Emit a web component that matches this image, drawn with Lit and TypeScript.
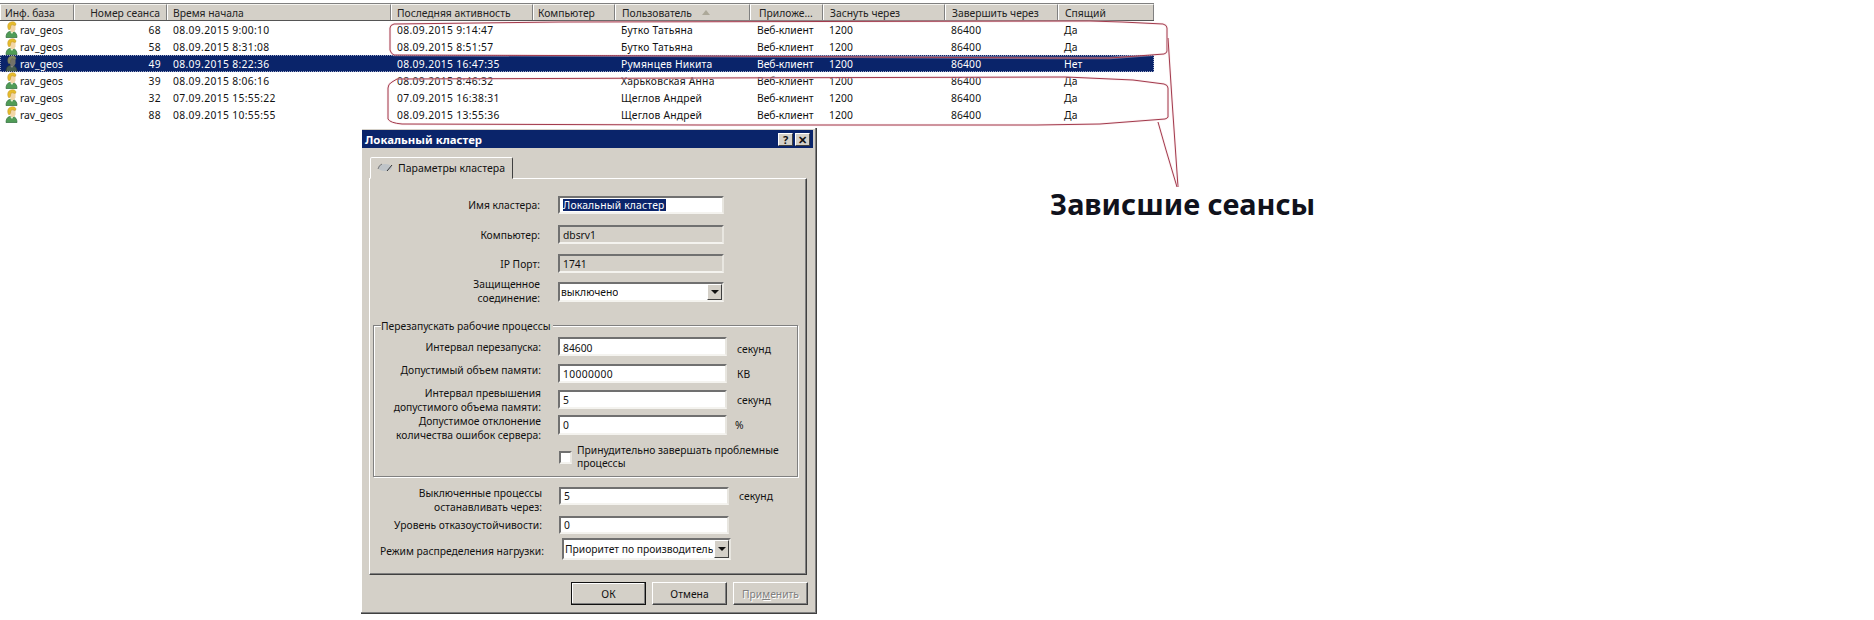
import { LitElement, html, css, svg } from "lit";
import { customElement } from "lit/decorators.js";

const COLS = [
  { t: "Инф. база", w: 74, c: "h0" },
  { t: "Номер сеанса", w: 93, c: "num" },
  { t: "Время начала", w: 224, c: "hl" },
  { t: "Последняя активность", w: 142, c: "hl" },
  { t: "Компьютер", w: 82, c: "hc" },
  { t: "Пользователь", w: 135, c: "sort" },
  { t: "Приложе...", w: 73, c: "hr" },
  { t: "Заснуть через", w: 122, c: "" },
  { t: "Завершить через", w: 113, c: "" },
  { t: "Спящий", w: 96, c: "" },
];

const ROWS = [
  ["rav_geos", "68", "08.09.2015 9:00:10", "08.09.2015 9:14:47", "", "Бутко Татьяна", "Веб-клиент", "1200", "86400", "Да"],
  ["rav_geos", "58", "08.09.2015 8:31:08", "08.09.2015 8:51:57", "", "Бутко Татьяна", "Веб-клиент", "1200", "86400", "Да"],
  ["rav_geos", "49", "08.09.2015 8:22:36", "08.09.2015 16:47:35", "", "Румянцев Никита", "Веб-клиент", "1200", "86400", "Нет"],
  ["rav_geos", "39", "08.09.2015 8:06:16", "08.09.2015 8:46:32", "", "Харьковская Анна", "Веб-клиент", "1200", "86400", "Да"],
  ["rav_geos", "32", "07.09.2015 15:55:22", "07.09.2015 16:38:31", "", "Щеглов Андрей", "Веб-клиент", "1200", "86400", "Да"],
  ["rav_geos", "88", "08.09.2015 10:55:55", "08.09.2015 13:55:36", "", "Щеглов Андрей", "Веб-клиент", "1200", "86400", "Да"],
];

const CELL_CLASS = ["", "num dgt", "dgt", "dgt", "", "wide", "cl", "dgt2", "dgt2", "wide"];

const avatar = (sel: boolean) => {
  const hair = sel ? "#85855f" : "#e6bb2c";
  const hairDark = sel ? "#5f5f48" : "#b0851c";
  const face = sel ? "#73736a" : "#f2d6a8";
  const body = sel ? "#465e50" : "#4f9c56";
  const bodyDark = sel ? "#2f3f38" : "#2d6a3a";
  return html`<svg class="ava" width="15" height="17" viewBox="0 0 15 17">
    <path d="M2 16.500c0-3.500 1.500-5.500 3.500-6h3.500c2.500.5 4 2.500 4 6z" fill=${body} stroke=${bodyDark} stroke-width=".7" />
    <path d="M6 10.500l2 2.500 1.500-2.500z" fill=${sel ? "#8a8a8a" : "#e8f0d8"} />
    <path d="M5.500 4h6v4.500l-1.500 2.500h-2.500l-2-2.500z" fill=${face} />
    <path d="M5 9c-1.500-1.500-1.500-4 -1-5.500.8-2 3-3 5-2.800 2 .2 3 1.300 3 3l-1 .8-3-.8-1.200 1-.3 2.500z" fill=${hair} stroke=${hairDark} stroke-width=".4" />
  </svg>`;
};

@customElement("app-root")
export class AppRoot extends LitElement {
  static styles = css`
    :host {
      display: block;
      position: relative;
      width: 1874px;
      height: 620px;
      background: #fff;
      overflow: hidden;
      font-family: "Noto Sans", "Liberation Sans", sans-serif;
      font-size: 10.3px;
      color: #111;
    }
    .table { padding-top: 3px; width: 1154px; }
    .tr { display: flex; height: 17px; align-items: center; white-space: nowrap; }
    .thead {
      box-sizing: border-box;
      height: 18px;
      background: #d4d0c8;
      border-top: 1px solid #808080;
      border-bottom: 1px solid #555;
    }
    .th {
      flex: none;
      box-sizing: border-box;
      height: 100%;
      padding: 0 6px;
      line-height: 16px;
      border-left: 1px solid #fff;
      border-right: 1px solid #808080;
      border-top: 1px solid #f4f3ef;
      color: #222;
    }
    .th.h0 { padding-left: 4px; }
    .th.hl { padding-left: 5px; }
    .th.hc { padding-left: 4px; }
    .th.hr { padding-left: 8px; padding-right: 0; }
    .th.num, .td.num { text-align: right; }
    .th.sort { display: flex; align-items: center; gap: 10px; }
    .arrow { width: 0; height: 0; border: 4px solid transparent; border-top: 0; border-bottom: 5px solid #aca899; }
    .td { flex: none; box-sizing: border-box; padding: 0 6px; overflow: hidden; height: 17px; line-height: 19px; }
    .td.lead { display: flex; align-items: center; padding: 0 0 0 4px; gap: 1px; line-height: 17px; }
    .lead span { padding-top: 2px; }
    .td.cl { padding-left: 7px; }
    .dgt { letter-spacing: 0.35px; }
    .dgt2 { letter-spacing: 0.15px; }
    .wide { letter-spacing: 0.2px; }
    .sel { background: #0a246a; color: #fff; outline: 1px dotted #9aa4c4; outline-offset: -1px; }
    .ava { flex: none; }

    .overlay { position: absolute; left: 0; top: 0; pointer-events: none; }
    .heading {
      position: absolute;
      left: 1050px;
      top: 185px;
      font-size: 28.900px;
      font-weight: 700;
      line-height: 38px;
      color: #10121c;
      white-space: nowrap;
    }

    .win {
      position: absolute;
      left: 361px;
      top: 128px;
      width: 456px;
      height: 486px;
      box-sizing: border-box;
      background: #d4d0c8;
      padding: 2px 3px 0 1px;
      border-right: 1px solid #404040;
      border-bottom: 1px solid #404040;
      box-shadow: inset -1px -1px 0 #808080, inset 1px 1px 0 #fff;
      color: #111;
    }
    .titlebar {
      height: 18px;
      background: #0a246a;
      color: #fff;
      font-weight: 700;
      font-size: 11.400px;
      display: flex;
      align-items: center;
      justify-content: space-between;
      padding: 0 3px 0 3px;
    }
    .tbtns { display: flex; gap: 2px; }
    .tbtn {
      width: 15px;
      height: 13px;
      box-sizing: border-box;
      background: #d4d0c8;
      border: 1px solid;
      border-color: #fff #404040 #404040 #fff;
      color: #111;
      display: flex;
      align-items: center;
      justify-content: center;
      font-size: 11px;
      font-weight: 700;
      line-height: 1;
    }
    .tabs { display: flex; padding: 9px 0 0 8px; height: 21px; }
    .tab {
      width: 143px;
      box-sizing: border-box;
      height: 22px;
      background: #d4d0c8;
      border: 1px solid;
      border-color: #fff #404040 transparent #fff;
      border-radius: 2px 2px 0 0;
      display: flex;
      align-items: center;
      gap: 5px;
      padding: 0 0 1px 6px;
      position: relative;
      z-index: 1;
      font-size: 10.500px;
    }
    .panel {
      margin-left: 7px;
      width: 438px;
      height: 397px;
      box-sizing: border-box;
      border: 1px solid;
      border-color: #fff #404040 #404040 #fff;
      box-shadow: inset -1px -1px 0 #808080;
      padding-top: 17px;
      display: flex;
      flex-direction: column;
    }
    .row { display: grid; align-items: center; }
    .r1 { grid-template-columns: 170px 18px 166px; }
    .r2 { grid-template-columns: 167px 17px 169px 10px auto; }
    .r3 { grid-template-columns: 172px 17px 170px 10px auto; }
    .lab { text-align: right; line-height: 14px; white-space: nowrap; margin: -6px 0; position: relative; }
    .field {
      box-sizing: border-box;
      background: #fff;
      border: 2px solid;
      border-color: #707070 #e8e6e0 #f4f3ef #707070;
      padding: 0 3px;
      display: flex;
      align-items: center;
      white-space: nowrap;
      overflow: hidden;
    }
    .h18 { height: 18px; }
    .h19 { height: 19px; }
    .h20 { height: 20px; }
    .h22 { height: 22px; }
    .off { background: #d4d0c8; }
    .lower { padding-top: 2px; }
    .seltext { background: #0a246a; color: #fff; line-height: 12px; padding: 0 1px 0 0; letter-spacing: 0.2px; }
    .mt11 { margin-top: 11px; }
    .mt10 { margin-top: 10px; }
    .mt9 { margin-top: 9px; }
    .mt8 { margin-top: 8px; }
    .mt7 { margin-top: 7px; }
    .mt6 { margin-top: 6px; }
    .mt4 { margin-top: 4px; }
    .up4 { top: -4px; }
    .up1 { top: -1px; }
    .dn2 { top: 2px; left: 2px; }
    .dn3 { top: 3px; }
    .dn4 { top: 4px; }
    .unit { white-space: nowrap; position: relative; }
    .unit.low { top: 2px; }
    .unit.pct { margin-left: -2px; }
    .select { justify-content: space-between; padding: 0; }
    .select .v { padding-left: 1px; overflow: hidden; }
    .dd {
      flex: none;
      width: 15px;
      height: 100%;
      box-sizing: border-box;
      background: #d4d0c8;
      border: 1px solid;
      border-color: #fff #404040 #404040 #fff;
      display: flex;
      align-items: center;
      justify-content: center;
    }
    .dd i { width: 0; height: 0; border: 4px solid transparent; border-bottom: 0; border-top: 4px solid #111; }
    .group {
      margin: 23px 8px 0 3px;
      height: 152px;
      box-sizing: border-box;
      border: 1px solid #808080;
      box-shadow: 1px 1px 0 #fff, inset 1px 1px 0 #fff;
      padding-top: 6px;
      flex: none;
    }
    .legend {
      width: fit-content;
      margin: -13px 0 0 7px;
      height: 14px;
      line-height: 14px;
      background: #d4d0c8;
      padding: 0 2px 0 0;
    }
    .g1 { margin-top: 4px; }
    .check {
      display: flex;
      gap: 5px;
      margin: 9px 0 0 185px;
      line-height: 13px;
      align-items: center;
    }
    .box {
      flex: none;
      width: 13px;
      height: 13px;
      box-sizing: border-box;
      background: #fff;
      border: 2px solid;
      border-color: #707070 #e8e6e0 #f4f3ef #707070;
    }
    .s3 { margin-top: 10px; }
    .sel3 { margin-left: 3px; width: 169px; }
    .foot {
      display: flex;
      gap: 6px;
      justify-content: flex-end;
      padding: 7px 5px 0 0;
    }
    .btn {
      box-sizing: border-box;
      width: 75px;
      height: 23px;
      border: 1px solid;
      border-color: #fff #404040 #404040 #fff;
      box-shadow: inset -1px -1px 0 #808080;
      display: flex;
      align-items: center;
      justify-content: center;
    }
    .btn.def { border: 1px solid #111; box-shadow: inset -1px -1px 0 #808080, inset 1px 1px 0 #fff; }
    .btn.dis { color: #808080; text-shadow: 1px 1px 0 #fff; }
  `;

  private lines() {
    const color = "#a23a4c";
    const paths = [
      "M1090 21 L1122 22 L1163 24 Q1167 25 1167 28 L1167 51 Q1167 53 1164 54 L1110 58 L1050 58 L700 56 L394 55 Q391 54 390 50 L390 28 Q390 25 394 24 L560 22 L1090 21",
      "M397 79 L700 78 L1066 77 L1133 80 L1164 84 Q1168 85 1168 88 L1168 117 Q1168 118 1165 119 L1100 124 L1037 125 L700 125 L402 124 Q390 123 388 119 L388 88 Q388 84 392 82 L397 79",
      "M1168 38 L1172 100 L1178 187",
      "M1158 122 L1166 150 L1177 187",
    ];
    return svg`${paths.map(
      (d) => svg`<path d=${d} fill="none" stroke="#f6d8dc" stroke-width="2.5" opacity="0.45" />
        <path d=${d} fill="none" stroke=${color} stroke-width="1" />`
    )}`;
  }

  render() {
    return html`
      <div class="table">
        <div class="tr thead">
          ${COLS.map(
            (c) => html`<div class="th ${c.c}" style="width:${c.w}px">
              ${c.t}${c.c === "sort" ? html`<span class="arrow"></span>` : ""}
            </div>`
          )}
        </div>
        ${ROWS.map(
          (r, i) => html`<div class="tr ${i === 2 ? "sel" : ""}">
            ${r.map((v, j) =>
              j === 0
                ? html`<div class="td lead" style="width:${COLS[0].w}px">${avatar(i === 2)}<span>${v}</span></div>`
                : html`<div class="td ${CELL_CLASS[j]}" style="width:${COLS[j].w}px">${v}</div>`
            )}
          </div>`
        )}
      </div>

      <div class="win">
        <div class="titlebar">
          <span>Локальный кластер</span>
          <div class="tbtns"><span class="tbtn">?</span><span class="tbtn">✕</span></div>
        </div>
        <div class="tabs">
          <div class="tab">
            <svg width="16" height="9" viewBox="0 0 16 9">
              <ellipse cx="8" cy="4.500" rx="7" ry="3.500" fill="#bfc4c8" />
              <path d="M1 6 Q2 2 5 1" fill="none" stroke="#777" />
              <path d="M10 8 L15 2" fill="none" stroke="#333" />
            </svg>
            <span>Параметры кластера</span>
          </div>
        </div>
        <div class="panel">
          <div class="row r1">
            <div class="lab">Имя кластера:</div><span></span>
            <div class="field h18"><span class="seltext">Локальный кластер</span></div>
          </div>
          <div class="row r1 mt11">
            <div class="lab">Компьютер:</div><span></span>
            <div class="field h19 off">dbsrv1</div>
          </div>
          <div class="row r1 mt10">
            <div class="lab">IP Порт:</div><span></span>
            <div class="field h19 off">1741</div>
          </div>
          <div class="row r1 mt9">
            <div class="lab up1">Защищенное<br />соединение:</div><span></span>
            <div class="field h20 select"><span class="v">выключено</span><span class="dd"><i></i></span></div>
          </div>

          <div class="group">
            <div class="legend">Перезапускать рабочие процессы</div>
            <div class="row r2 g1">
              <div class="lab">Интервал перезапуска:</div><span></span>
              <div class="field h19 lower">84600</div><span></span>
              <div class="unit low">секунд</div>
            </div>
            <div class="row r2 mt8">
              <div class="lab up4">Допустимый объем памяти:</div><span></span>
              <div class="field h19 dgt">10000000</div><span></span>
              <div class="unit">КB</div>
            </div>
            <div class="row r2 mt7">
              <div class="lab">Интервал превышения<br />допустимого объема памяти:</div><span></span>
              <div class="field h19">5</div><span></span>
              <div class="unit">секунд</div>
            </div>
            <div class="row r2 mt6">
              <div class="lab dn3">Допустимое отклонение<br />количества ошибок сервера:</div><span></span>
              <div class="field h20">0</div><span></span>
              <div class="unit pct">%</div>
            </div>
            <div class="check">
              <span class="box"></span>
              <span>Принудительно завершать проблемные<br />процессы</span>
            </div>
          </div>

          <div class="row r3 s3">
            <div class="lab dn4">Выключенные процессы<br />останавливать через:</div><span></span>
            <div class="field h18">5</div><span></span>
            <div class="unit">секунд</div>
          </div>
          <div class="row r3 mt11">
            <div class="lab">Уровень отказоустойчивости:</div><span></span>
            <div class="field h18">0</div>
          </div>
          <div class="row r3 mt4">
            <div class="lab dn2">Режим распределения нагрузки:</div><span></span>
            <div class="field h22 select sel3"><span class="v">Приоритет по производитель</span><span class="dd"><i></i></span></div>
          </div>
        </div>
        <div class="foot">
          <div class="btn def">ОК</div>
          <div class="btn">Отмена</div>
          <div class="btn dis"><span>При<u>м</u>енить</span></div>
        </div>
      </div>

      <svg class="overlay" width="1874" height="620" viewBox="0 0 1874 620">${this.lines()}</svg>
      <div class="heading">Зависшие сеансы</div>
    `;
  }
}
